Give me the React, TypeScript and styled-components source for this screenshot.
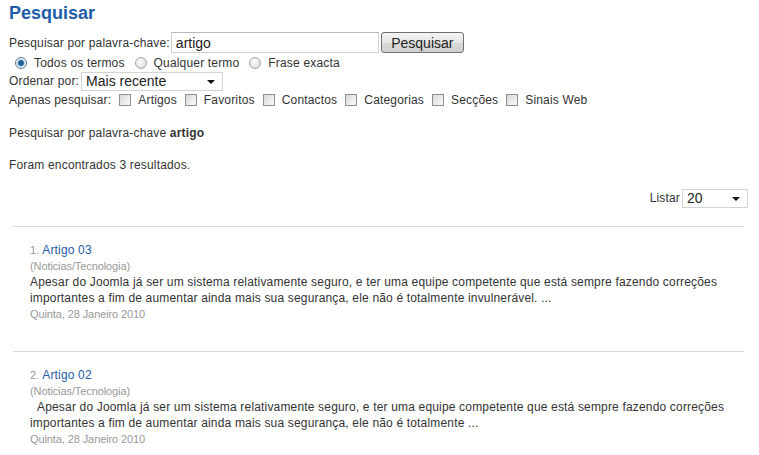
import React from 'react';
import styled, { createGlobalStyle } from 'styled-components';

const GlobalStyle = createGlobalStyle`
  body {
    margin: 0;
    background: #fff;
    font-family: "Liberation Sans", Arial, sans-serif;
    font-size: 12px;
    letter-spacing: 0.17px;
    color: #333;
  }
`;

const Page = styled.div`
  width: 759px;
  padding: 2px 15px 0 9px;
  box-sizing: border-box;
`;

const Title = styled.h1`
  margin: 0;
  font-size: 18px;
  line-height: 22px;
  font-weight: bold;
  letter-spacing: 0;
  color: #1f5ca8;
`;

const Row = styled.div<{ $h: number; $top?: number }>`
  display: flex;
  align-items: center;
  height: ${p => p.$h}px;
  margin-top: ${p => p.$top || 0}px;
  white-space: nowrap;
`;

const TextInput = styled.input`
  width: 208px;
  height: 21px;
  box-sizing: border-box;
  margin: 0 0 0 1px;
  padding: 0 4px;
  border: 1px solid #cfcfcf;
  border-top-color: #b9b9b9;
  font-family: "Liberation Sans", Arial, sans-serif;
  font-size: 14px;
  color: #222;
  outline: none;
`;

const Button = styled.button`
  width: 83px;
  height: 21px;
  margin-left: 2px;
  padding: 0;
  border: 1px solid #707070;
  border-radius: 3px;
  background: linear-gradient(#f4f4f4, #e6e6e6 50%, #d9d9d9 51%, #d0d0d0);
  font-family: "Liberation Sans", Arial, sans-serif;
  font-size: 14px;
  color: #222;
`;

const Choice = styled.label`
  display: inline-flex;
  align-items: center;
  margin-right: 10px;
`;

const Radio = styled.span<{ $on?: boolean }>`
  width: 12px;
  height: 12px;
  box-sizing: border-box;
  border-radius: 50%;
  border: 1px solid ${p => (p.$on ? '#5a7a94' : '#a8a8a8')};
  background: ${p =>
    p.$on
      ? 'radial-gradient(circle, #1c5d8e 0 2.2px, #4a8fc0 2.8px, #dde8f0 3.8px, #f6f6f6 6px)'
      : 'radial-gradient(circle at 40% 35%, #fdfdfd 0, #e6e6e6 60%, #cfcfcf 100%)'};
  margin: 0 7px 0 ${p => (p.$on ? 6 : 0)}px;
`;

const Check = styled.span`
  width: 12px;
  height: 12px;
  box-sizing: border-box;
  border: 1px solid #8e8e8e;
  background: linear-gradient(135deg, #d8d8d8, #f4f4f4 80%);
  margin: 0 7px 0 -2px;
`;

const SelectWrap = styled.span<{ $w: number }>`
  position: relative;
  display: inline-block;
  width: ${p => p.$w}px;
  margin-left: 2px;
  &::after {
    content: '';
    position: absolute;
    right: 8px;
    top: 8px;
    border-left: 4px solid transparent;
    border-right: 4px solid transparent;
    border-top: 4px solid #111;
    pointer-events: none;
  }
`;

const Select = styled.select`
  appearance: none;
  width: 100%;
  height: 19px;
  box-sizing: border-box;
  padding: 0 4px;
  border: 1px solid #d4d4d4;
  border-radius: 0;
  background: #fff;
  font-family: "Liberation Sans", Arial, sans-serif;
  font-size: 14px;
  color: #222;
  outline: none;
`;

const Label = styled.span`
  margin-right: 10px;
`;

const Para = styled.p<{ $top: number }>`
  margin: ${p => p.$top}px 0 0;
  line-height: 16px;
`;

const ListRow = styled.div`
  display: flex;
  justify-content: flex-end;
  align-items: center;
  height: 20px;
  margin: 15px -4px 18px 0;
`;

const Result = styled.div`
  border-top: 1px solid #dcdcdc;
  margin: 0 0 0 4px;
  padding: 15px 0 29px 17px;
  line-height: 16px;
`;

const Small = styled.span`
  font-size: 11px;
  letter-spacing: 0;
  color: #999;
`;

const Link = styled.a`
  font-size: 12px;
  color: #1f5ca8;
  text-decoration: none;
`;

const Meta = styled.div`
  font-size: 11px;
  letter-spacing: -0.1px;
  color: #999;
`;

const Desc = styled.div`
  width: 715px;
  color: #333;
`;

const results = [
  {
    n: 1,
    title: 'Artigo 03',
    text: 'Apesar do Joomla já ser um sistema relativamente seguro, e ter uma equipe competente que está sempre fazendo correções importantes a fim de aumentar ainda mais sua segurança, ele não é totalmente invulnerável. ...',
  },
  {
    n: 2,
    title: 'Artigo 02',
    text: '\u00a0\u00a0Apesar do Joomla já ser um sistema relativamente seguro, e ter uma equipe competente que está sempre fazendo correções importantes a fim de aumentar ainda mais sua segurança, ele não é totalmente ...',
  },
];

const areas = ['Artigos', 'Favoritos', 'Contactos', 'Categorias', 'Secções', 'Sinais Web'];

export default function App() {
  return (
    <Page>
      <GlobalStyle />
      <Title>Pesquisar</Title>
      <Row $h={23} $top={7}>
        Pesquisar por palavra-chave:
        <TextInput defaultValue="artigo" />
        <Button>Pesquisar</Button>
      </Row>
      <Row $h={17}>
        <Choice><Radio $on />Todos os termos</Choice>
        <Choice><Radio />Qualquer termo</Choice>
        <Choice><Radio />Frase exacta</Choice>
      </Row>
      <Row $h={20}>
        Ordenar por:
        <SelectWrap $w={142}>
          <Select defaultValue="recent">
            <option value="recent">Mais recente</option>
          </Select>
        </SelectWrap>
      </Row>
      <Row $h={18}>
        <Label>Apenas pesquisar:</Label>
        {areas.map(a => (
          <Choice key={a}><Check />{a}</Choice>
        ))}
      </Row>
      <Para $top={16}>Pesquisar por palavra-chave <b>artigo</b></Para>
      <Para $top={16}>Foram encontrados 3 resultados.</Para>
      <ListRow>
        Listar
        <SelectWrap $w={66}>
          <Select defaultValue="20">
            <option value="20">20</option>
          </Select>
        </SelectWrap>
      </ListRow>
      {results.map(r => (
        <Result key={r.n}>
          <div>
            <Small>{r.n}. </Small>
            <Link href="#">{r.title}</Link>
          </div>
          <Meta>(Noticias/Tecnologia)</Meta>
          <Desc>{r.text}</Desc>
          <Meta>Quinta, 28 Janeiro 2010</Meta>
        </Result>
      ))}
    </Page>
  );
}
